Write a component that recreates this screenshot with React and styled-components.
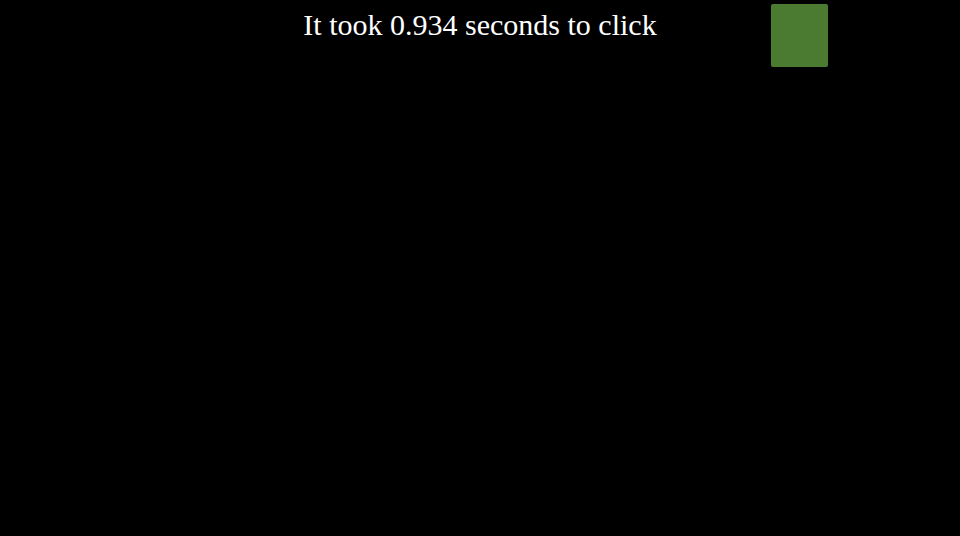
import React from "react";
import styled, { createGlobalStyle } from "styled-components";

const Global = createGlobalStyle`
  html, body { margin: 0; padding: 0; background: #000; }
  body { font-family: "Liberation Serif", "Times New Roman", serif; }
`;

const Stage = styled.div`
  position: relative;
  width: 960px;
  height: 536px;
  background: #000;
  overflow: hidden;
`;

const Message = styled.h1`
  margin: 0;
  padding-top: 8px;
  text-align: center;
  color: #fff;
  font-family: "Liberation Serif", "Times New Roman", serif;
  font-weight: normal;
  font-size: 30px;
  line-height: 34px;
`;

const Target = styled.div`
  position: absolute;
  left: ${(p) => p.x}px;
  top: ${(p) => p.y}px;
  width: ${(p) => p.size}px;
  height: ${(p) => p.h}px;
  background: #4b7b31;
  border-radius: 2px;
`;

export default function App() {
  return (
    <>
      <Global />
      <Stage>
        <Message>It took 0.934 seconds to click</Message>
        <Target x={771} y={4} size={57} h={63} />
      </Stage>
    </>
  );
}
